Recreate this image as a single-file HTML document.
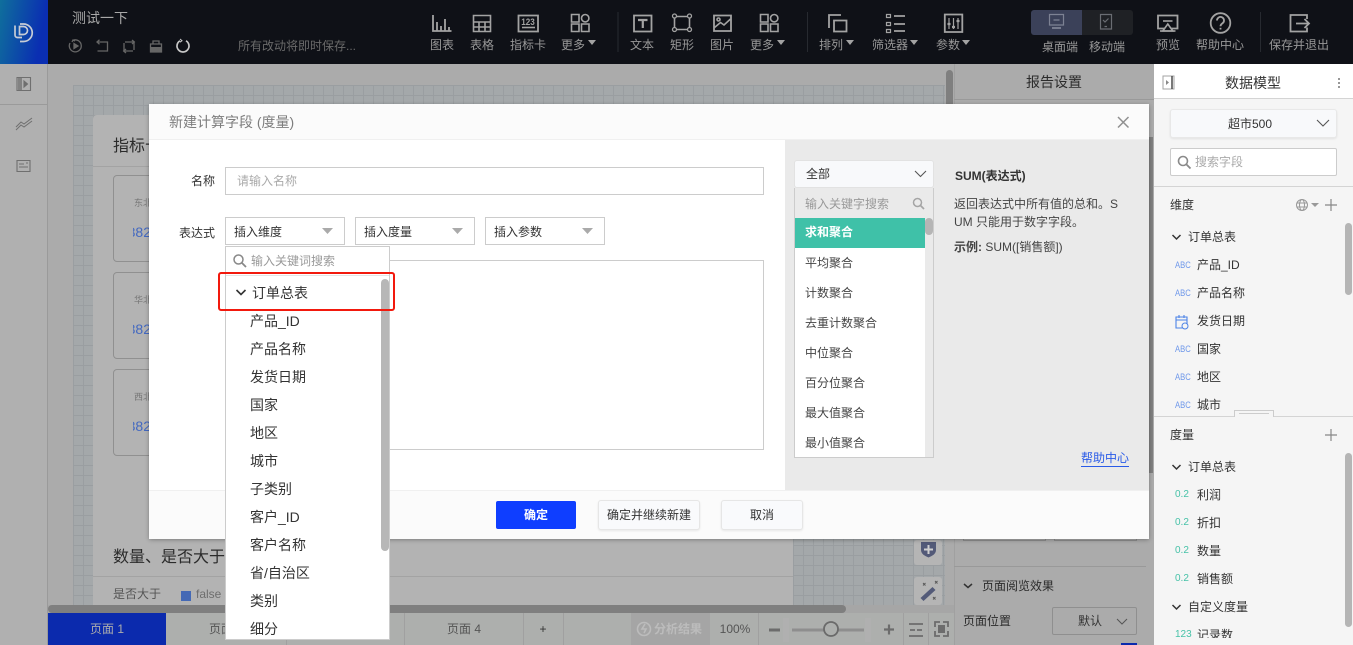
<!DOCTYPE html>
<html lang="zh"><head><meta charset="utf-8"><title>新建计算字段</title>
<style>
html,body{margin:0;padding:0;width:1353px;height:645px;overflow:hidden;background:#ababab}
body{font:12px/16px "Liberation Sans","Noto Sans CJK SC",sans-serif;color:#333;position:relative}
div,span,a{position:absolute;box-sizing:border-box}
.t{white-space:nowrap;line-height:16px}
.c{transform:translateX(-50%)}
.lb{color:#989898;top:37px}
.li{font-size:14px;color:#333;left:250px;line-height:18px}
.fn{left:805px;color:#444}
.abc{left:1175px;font-size:9px;color:#6f98ea;transform:scaleX(.85);transform-origin:left}
.num{left:1175px;font-size:10px;color:#47c2a8}
.f{left:1197px;color:#333}
.sel{background:#fff;border:1px solid #ccc;height:28px;top:217px;width:120px}
.btn{background:#f9fafc;border:1px solid #e6e6e6;border-radius:3px;box-shadow:0 1px 2px rgba(0,0,0,.08);text-align:center;color:#333}
svg{position:absolute;left:0;top:0;overflow:visible}
</style></head><body>

<!-- top bar -->
<div style="left:0;top:0;width:1353px;height:64px;background:#0f1117"></div>
<div style="left:0;top:0;width:48px;height:64px;background:linear-gradient(100deg,#0f6f9c,#0a2eb2 80%)"></div>
<div style="left:1031px;top:10px;width:51px;height:25px;background:#3b4159;border-radius:3px 0 0 3px"></div>
<div style="left:1082px;top:10px;width:51px;height:25px;background:#1f2125;border-radius:0 3px 3px 0"></div>
<div class="t" style="left:72px;top:10px;font-size:14px;color:#a8a8a8">测试一下</div>
<div class="t" style="left:238px;top:38px;color:#6a6a6a">所有改动将即时保存...</div>
<span class="t c lb" style="left:442px">图表</span>
<span class="t c lb" style="left:482px">表格</span>
<span class="t c lb" style="left:528px">指标卡</span>
<span class="t c lb" style="left:573px">更多</span>
<span class="t c lb" style="left:642px">文本</span>
<span class="t c lb" style="left:682px">矩形</span>
<span class="t c lb" style="left:722px">图片</span>
<span class="t c lb" style="left:762px">更多</span>
<span class="t c lb" style="left:831px">排列</span>
<span class="t c lb" style="left:890px">筛选器</span>
<span class="t c lb" style="left:948px">参数</span>
<span class="t c lb" style="left:1060px;top:39px">桌面端</span>
<span class="t c lb" style="left:1107px;top:39px">移动端</span>
<span class="t c lb" style="left:1168px">预览</span>
<span class="t c lb" style="left:1220px">帮助中心</span>
<span class="t c lb" style="left:1299px">保存并退出</span>

<!-- background workspace -->
<div style="left:0;top:64px;width:48px;height:581px;background:#b0b0b0;border-right:1px solid #9a9a9a"></div>
<div style="left:0;top:104px;width:47px;height:1px;background:#9a9a9a"></div>
<div style="left:48px;top:64px;width:906px;height:549px;background:#ababab"></div>
<div style="left:73px;top:85px;width:872px;height:521px;background-color:#a4a8aa;background-image:linear-gradient(#9a9ea1 1px,transparent 1px),linear-gradient(90deg,#9a9ea1 1px,transparent 1px);background-size:10px 10px"></div>
<div style="left:93px;top:115px;width:700px;height:491px;background:#b3b3b3;border-radius:4px 4px 0 0"></div>
<div style="left:93px;top:166px;width:700px;height:1px;background:#a3a3a3"></div>
<div class="t" style="left:113px;top:139px;font-size:16px;color:#2b2b2b">指标卡</div>
<div style="left:113px;top:175px;width:60px;height:87px;border:1px solid #909090;border-radius:4px"></div>
<div style="left:113px;top:272px;width:60px;height:87px;border:1px solid #909090;border-radius:4px"></div>
<div style="left:113px;top:369px;width:60px;height:87px;border:1px solid #909090;border-radius:4px"></div>
<div class="t" style="left:134px;top:195px;font-size:9px;color:#777">东北</div>
<div class="t" style="left:134px;top:292px;font-size:9px;color:#777">华北</div>
<div class="t" style="left:134px;top:389px;font-size:9px;color:#777">西北</div>
<div class="t" style="left:133px;top:224px;width:18px;overflow:hidden;font-size:14px;color:#4469c0;direction:rtl">382</div>
<div class="t" style="left:133px;top:321px;width:18px;overflow:hidden;font-size:14px;color:#4469c0;direction:rtl">382</div>
<div class="t" style="left:133px;top:418px;width:18px;overflow:hidden;font-size:14px;color:#4469c0;direction:rtl">382</div>
<div class="t" style="left:113px;top:549px;font-size:16px;line-height:18px;color:#2b2b2b">数量、是否大于</div>
<div style="left:93px;top:576px;width:700px;height:1px;background:#a3a3a3"></div>
<div class="t" style="left:113px;top:586px;color:#555">是否大于</div>
<div style="left:181px;top:591px;width:10px;height:10px;background:#4469b5"></div>
<div class="t" style="left:196px;top:586px;color:#6e6e6e">false</div>
<div style="left:914px;top:540px;width:28px;height:25px;background:#b5b5b5;border-radius:3px"></div>
<div style="left:914px;top:577px;width:28px;height:28px;background:#b5b5b5;border-radius:3px"></div>
<div style="left:48px;top:605px;width:906px;height:8px;background:#a6a6a6"></div>
<div style="left:48px;top:605px;width:798px;height:8px;background:#7f7f7f;border-radius:4px"></div>
<div style="left:946px;top:70px;width:7px;height:100px;background:#7f7f7f;border-radius:4px"></div>

<!-- bottom bar -->
<div style="left:48px;top:613px;width:906px;height:32px;background:#adafad"></div>
<div style="left:48px;top:613px;width:118px;height:32px;background:#0b2aad"></div>
<div class="t c" style="left:107px;top:621px;color:#adadad">页面 1</div>
<div class="t c" style="left:226px;top:621px;color:#555">页面 2</div>
<div class="t c" style="left:464px;top:621px;color:#555">页面 4</div>
<div class="t c" style="left:543px;top:621px;color:#333">+</div>
<div style="left:286px;top:613px;width:1px;height:32px;background:#a0a0a0"></div>
<div style="left:404px;top:613px;width:1px;height:32px;background:#a0a0a0"></div>
<div style="left:523px;top:613px;width:1px;height:32px;background:#a0a0a0"></div>
<div style="left:563px;top:613px;width:1px;height:32px;background:#a0a0a0"></div>
<div style="left:631px;top:613px;width:79px;height:32px;background:#a5a5a5"></div>
<div class="t" style="left:654px;top:621px;color:#bcbcbc;font-weight:bold">分析结果</div>
<div class="t c" style="left:735px;top:621px;color:#555">100%</div>
<div style="left:758px;top:613px;width:1px;height:32px;background:#a0a0a0"></div>
<div style="left:903px;top:613px;width:1px;height:32px;background:#a0a0a0"></div>
<div style="left:928px;top:613px;width:1px;height:32px;background:#a0a0a0"></div>

<!-- report settings -->
<div style="left:954px;top:64px;width:200px;height:581px;background:#ababab;border-left:1px solid #a0a0a0"></div>
<div style="left:954px;top:99px;width:200px;height:1px;background:#999"></div>
<div class="t c" style="left:1054px;top:74px;font-size:14px;color:#2b2b2b">报告设置</div>
<div style="left:1149px;top:100px;width:4px;height:37px;background:#ababab"></div>
<div style="left:1149px;top:137px;width:4px;height:336px;background:#808080"></div>
<div style="left:954px;top:566px;width:192px;height:1px;background:#999"></div>
<div style="left:963px;top:530px;width:83px;height:11px;border:1px solid #8f8f8f;border-top:0"></div>
<div style="left:1054px;top:530px;width:83px;height:11px;border:1px solid #8f8f8f;border-top:0"></div>
<div class="t" style="left:982px;top:578px;color:#2b2b2b">页面阅览效果</div>
<div class="t" style="left:963px;top:613px;color:#2b2b2b">页面位置</div>
<div style="left:1052px;top:607px;width:85px;height:28px;border:1px solid #8f8f8f;border-radius:2px"></div>
<div class="t" style="left:1078px;top:613px;color:#333">默认</div>
<div style="left:1121px;top:643px;width:16px;height:2px;background:#0b2aad"></div>

<!-- data model panel -->
<div style="left:1154px;top:64px;width:199px;height:581px;background:#f5f5f5"></div>
<div style="left:1154px;top:64px;width:199px;height:35px;background:#fff;border-bottom:1px solid #d4d4d4"></div>
<div class="t c" style="left:1253px;top:75px;font-size:14px;color:#333">数据模型</div>
<div style="left:1170px;top:109px;width:167px;height:29px;background:#f8f9fb;border:1px solid #e8e8e8;border-radius:3px;box-shadow:0 1px 2px rgba(0,0,0,.08)"></div>
<div class="t c" style="left:1250px;top:116px;color:#333">超市500</div>
<div style="left:1170px;top:148px;width:167px;height:28px;background:#fff;border:1px solid #ccc;border-radius:2px"></div>
<div class="t" style="left:1195px;top:154px;color:#aaa">搜索字段</div>
<div style="left:1154px;top:186px;width:199px;height:1px;background:#d4d4d4"></div>
<div class="t" style="left:1170px;top:197px;color:#333">维度</div>
<div class="t" style="left:1188px;top:229px;color:#333">订单总表</div>
<span class="t abc" style="top:257px">ABC</span><span class="t f" style="top:257px">产品_ID</span>
<span class="t abc" style="top:285px">ABC</span><span class="t f" style="top:285px">产品名称</span>
<span class="t f" style="top:313px">发货日期</span>
<span class="t abc" style="top:341px">ABC</span><span class="t f" style="top:341px">国家</span>
<span class="t abc" style="top:369px">ABC</span><span class="t f" style="top:369px">地区</span>
<div style="left:1154px;top:396px;width:190px;height:14px;overflow:hidden">
<span class="t abc" style="left:21px;top:1px">ABC</span><span class="t" style="left:43px;top:1px;color:#333">城市</span></div>
<div style="left:1345px;top:223px;width:7px;height:72px;background:#b5b5b5;border-radius:4px"></div>
<div style="left:1154px;top:416px;width:199px;height:1px;background:#d4d4d4"></div>
<div style="left:1234px;top:410px;width:40px;height:7px;background:#f5f5f5;border:1px solid #ccc;border-bottom:0"></div>
<div style="left:1239px;top:413px;width:30px;height:1px;background:#ccc"></div>
<div class="t" style="left:1170px;top:427px;color:#333">度量</div>
<div class="t" style="left:1188px;top:459px;color:#333">订单总表</div>
<span class="t num" style="top:487px">0.2</span><span class="t f" style="top:487px">利润</span>
<span class="t num" style="top:515px">0.2</span><span class="t f" style="top:515px">折扣</span>
<span class="t num" style="top:543px">0.2</span><span class="t f" style="top:543px">数量</span>
<span class="t num" style="top:571px">0.2</span><span class="t f" style="top:571px">销售额</span>
<div class="t" style="left:1188px;top:599px;color:#333">自定义度量</div>
<div style="left:1154px;top:625px;width:190px;height:13px;overflow:hidden">
<span class="t num" style="left:21px;top:2px">123</span><span class="t" style="left:43px;top:2px;color:#333">记录数</span></div>
<div style="left:1345px;top:453px;width:7px;height:174px;background:#b5b5b5;border-radius:4px"></div>

<!-- icons layer -->
<svg width="1353" height="645" viewBox="0 0 1353 645" fill="none" stroke="#a3a3a3" stroke-width="1.6">
 <!-- logo -->
 <g stroke="#c6ccd6" stroke-width="1.700"><path d="M15 25.500v9.500a2.500 2.500 0 0 0 2.500 2.500h4.500"/><path d="M20 24h3.500a8.700 8.700 0 0 1 0 17.500H20"/><path d="M19.500 26.500v8h4a4 4 0 0 0 0-8z"/></g>
 <!-- history -->
 <g stroke="#666" stroke-width="1.300"><path d="M73 40.300a6 6 0 1 1-3 2.700"/><path d="M72 42l1-2 2 1"/><path d="M74 43.500l4 2.500-4 2.500z" fill="#666"/>
 <path d="M98 42h9.500v9h-10"/><path d="M99.500 39.800l-2.500 2.200 2.500 2.200"/>
 <path d="M125 42h9v8M133 51h-9v-8"/><path d="M132 40l2.300 2-2.300 2M126 49l-2.300 2 2.300 2"/></g>
 <path d="M153 44v-3h6v3M150.500 44h11v8h-11z" stroke="#666" stroke-width="1.300"/><path d="M150.500 47h11v5h-11z" fill="#666" stroke="none"/>
 <path d="M180 40.800a6 6 0 1 0 6 0" stroke="#c8c8c8" stroke-width="1.700"/><path d="M180 39l2 1.700-2 1.500" stroke="#c8c8c8" stroke-width="1"/>
 <!-- chart -->
 <path d="M433 15v16h18.500M437 22v9M441 26v5M445 19v12M449 27v4" stroke-width="1.800"/>
 <path d="M473.500 15.500h17v16h-17zM473.500 22h17M473.500 27h17M479 22v9.500M485 22v9.500"/>
 <path d="M518.500 15.500h19.500v16h-19.500z" stroke-width="1.800"/><path d="M522 27.500h13"/>
 <path d="M571.500 14.500h7.500v7.500h-7.500zM571.500 24h7.500v7.500h-7.500zM581.500 24h7.500v7.500h-7.500z"/><circle cx="585.200" cy="18.200" r="3.700"/>
 <!-- sep -->
 <path d="M618 12v40M807.500 12v40M1260.500 12v40" stroke="#272a30" stroke-width="1"/>
 <path d="M634 15.500h17.500v16h-17.500z" stroke-width="1.800"/><path d="M638 20h9.500M642.800 20v8" stroke-width="2.200"/>
 <path d="M674.500 16.500h15v13h-15z"/><g fill="#0f1117" stroke-width="1.300"><circle cx="674.500" cy="16" r="2"/><circle cx="689.500" cy="16" r="2"/><circle cx="674.500" cy="29.500" r="2"/><circle cx="689.500" cy="29.500" r="2"/></g>
 <path d="M714 15.500h17v15.500h-17z" stroke-width="1.800"/><path d="M714.500 27.500l6-5 3.500 2.500 6.500-6"/><circle cx="718.500" cy="19.500" r="1.500"/>
 <path d="M760.500 14.500h7.500v7.500h-7.500zM760.500 24h7.500v7.500h-7.500zM770.500 24h7.500v7.500h-7.500z"/><circle cx="774.200" cy="18.200" r="3.700"/>
 <path d="M829 28V15h12" stroke-width="1.800"/><path d="M834 20.500h12.500v11H834z" stroke-width="1.800"/>
 <path d="M886.500 14.500h4v3h-4zM886.500 22.500h4v3h-4zM886.500 29.500h4v3h-4z" stroke-width="1.200"/><path d="M894 16h11M894 24h11M894 31h11" stroke-width="1.800"/>
 <path d="M944.800 14.500h17.500v17.500h-17.500z" stroke-width="1.800"/><path d="M949 18v11M953.500 18v11M958 18v11" stroke-width="1.200"/><path d="M947.500 24h3M952 27h3M956.500 21h3" stroke-width="2.200"/>
 <g fill="#a3a3a3" stroke="none"><path d="M588 40h8l-4 5zM777 40h8l-4 5zM846 40h8l-4 5zM910 40h8l-4 5zM962 40h8l-4 5z"/></g>
 <!-- desktop mobile -->
 <g stroke="#7d8294" stroke-width="1.200"><path d="M1049.500 14.500h14v10.500h-14zM1053.500 20h6"/><path d="M1052 28h9" stroke-width="1.800"/></g>
 <g stroke="#6a6d73" stroke-width="1.200"><path d="M1100.500 14.500h11v14.500h-11zM1103 20l2 2 3.500-3.500M1104.500 26.500h2.500"/></g>
 <!-- preview help exit -->
 <path d="M1158 15.500h19.500v13h-19.500z" stroke-width="1.800"/><path d="M1163 21h9.500" /><path d="M1167.800 24l5 7h-10z" fill="#0f1117" stroke-width="1.600"/><path d="M1160 31h15.500" />
 <circle cx="1220.500" cy="23" r="9.800" stroke-width="1.800"/><path d="M1217 20.500a3.500 3.500 0 1 1 5.500 2.800c-1.500 1-2 1.500-2 3" stroke-width="1.800"/><path d="M1220.500 27.800v1.700" stroke-width="1.800"/>
 <path d="M1307 19v-4h-16.500v16.500h16.500v-4" stroke-width="1.800"/><path d="M1296 23.500h12.500M1304.500 19l4.500 4.500-4.500 4.500" stroke-width="1.800"/>
 <!-- left rail -->
 <g stroke="#6f6f6f" stroke-width="1.100"><path d="M17 77.500h13.500v13H17z"/><path d="M19 78v12M21 78v12" stroke-width="1.400"/><path d="M24 81l3.500 3-3.500 3z" fill="#6f6f6f"/>
 <path d="M16 130l5-5 3 2 8-6M16 127l5-5 3 2 8-6" stroke-width="1"/>
 <path d="M17 160.500h13v11H17zM19 164h5M19 167h9M26 163h2"/></g>
 <!-- zoom controls -->
 <path d="M769 630h11" stroke="#6c6c6c" stroke-width="3"/>
 <path d="M792 630h72" stroke="#8e8e8e" stroke-width="3"/>
 <path d="M783 618h6v24h-6zM865 618h6v24h-6z" fill="#b0b0b0" stroke="none"/>
 <circle cx="831" cy="629" r="7" fill="#adafad" stroke="#6a6a6a" stroke-width="1.800"/>
 <path d="M884 629.500h10M889 624.500v10" stroke="#6c6c6c" stroke-width="2.200"/>
 <path d="M909 624h14M909 636h14M910 630h5M917 630h5" stroke="#6c6c6c" stroke-width="1.800"/>
 <path d="M935 627v-5h5M943 622h5v5M948 631v5h-5M940 636h-5v-5" stroke="#6c6c6c" stroke-width="1.800"/><path d="M938 625h7v8h-7z" fill="#6c6c6c" stroke="none"/>
 <circle cx="644" cy="629" r="6.500" stroke="#bcbcbc" stroke-width="1.600"/><path d="M645 624l-3 5h4l-2 4" stroke="#bcbcbc"/>
 <!-- side tools -->
 <path d="M921 542h15v8c0 4-4 6-7.500 7.500-3.500-1.500-7.500-3.500-7.500-7.500z" fill="#535a78" stroke="none"/><path d="M928.500 545v9M924 549.500h9" stroke="#cfcfcf" stroke-width="2"/>
 <path d="M920.500 598l12-11 3 3-12 11z" fill="#535a78" stroke="none"/><path d="M923 583l2.500 2.500M925.500 583l-2.500 2.500M933 597l2.500 2.500M935.500 597l-2.500 2.500M935 581l2.500 2.500M937.500 581l-2.500 2.500" stroke="#5a5a5a" stroke-width="1"/>
 <!-- settings arrows -->
 <path d="M964 584l4 3.500 4-3.500" stroke="#333" stroke-width="1.500"/>
 <path d="M1117 619l5 5 5-5" stroke="#555" stroke-width="1"/>
 <!-- data panel icons -->
 <path d="M1163 76h11v13h-11z" stroke="#a3a3a3" stroke-width="1"/><path d="M1172 76v13" stroke="#4a4a4a" stroke-width="1.500"/><path d="M1166 80l3 2.500-3 2.500z" fill="#888" stroke="none"/>
 <path d="M1339 78v2M1339 82v2M1339 86v2" stroke="#777" stroke-width="1.500"/>
 <path d="M1317 120l6 6 6-6" stroke="#555" stroke-width="1.100"/>
 <circle cx="1183" cy="161" r="4.500" stroke="#8a8a8a" stroke-width="1.600"/><path d="M1186.500 164.500l4 4" stroke="#8a8a8a" stroke-width="1.800"/>
 <circle cx="1302" cy="205" r="5.500" stroke="#999" stroke-width="1"/><ellipse cx="1302" cy="205" rx="2.500" ry="5.500" stroke="#999" stroke-width="1"/><path d="M1297 203h10M1297 207h10" stroke="#999" stroke-width="1"/>
 <path d="M1311 203h8l-4 4z" fill="#999" stroke="none"/>
 <path d="M1325 205h12M1331 199v12M1325 435h12M1331 429v12" stroke="#888" stroke-width="1.200"/>
 <path d="M1172.500 235l4 4 4-4M1172.500 465l4 4 4-4M1172.500 605l4 4 4-4" stroke="#333" stroke-width="1.500"/>
 <path d="M1176 317h11v11h-11zM1176 320h11M1179 315v3M1184 315v3" stroke="#4c83e6" stroke-width="1.100"/><circle cx="1185" cy="326" r="3" fill="#f5f5f5" stroke="#4c83e6" stroke-width="1"/>
</svg>
<div class="t c" style="left:528px;top:17px;font-size:9px;line-height:10px;color:#a3a3a3;font-weight:bold;transform:translateX(-50%) scaleX(.9)">123</div>

<!-- modal -->
<div style="left:149px;top:104px;width:1000px;height:435px;background:#fff;border-radius:2px;box-shadow:0 1px 4px rgba(0,0,0,.3)"></div>
<div style="left:149px;top:104px;width:1000px;height:36px;background:#fbfbfb;border-bottom:1px solid #f0f0f0"></div>
<div class="t" style="left:169px;top:114px;font-size:14px;color:#7d7d7d">新建计算字段 (度量)</div>
<svg width="1353" height="645" fill="none"><path d="M1118 117l10.500 10.500M1128.500 117L1118 127.500" stroke="#909090" stroke-width="1.500"/></svg>
<div style="left:785px;top:140px;width:364px;height:350px;background:#eaeaea"></div>
<div style="left:149px;top:490px;width:1000px;height:49px;background:#fbfbfb;border-top:1px solid #f0f0f0"></div>

<div class="t" style="left:191px;top:173px;color:#333">名称</div>
<div style="left:225px;top:167px;width:539px;height:28px;border:1px solid #ccc"></div>
<div class="t" style="left:237px;top:173px;color:#aaa">请输入名称</div>
<div class="t" style="left:179px;top:225px;color:#333">表达式</div>
<div class="sel" style="left:225px"></div><div class="t" style="left:234px;top:224px">插入维度</div>
<div class="sel" style="left:355px"></div><div class="t" style="left:364px;top:224px">插入度量</div>
<div class="sel" style="left:485px"></div><div class="t" style="left:494px;top:224px">插入参数</div>
<div style="left:225px;top:260px;width:539px;height:190px;border:1px solid #ccc"></div>

<!-- field dropdown -->
<div style="left:225px;top:246px;width:165px;height:394px;background:#fff;border:1px solid #ccc"></div>
<div style="left:226px;top:275px;width:163px;height:1px;background:#e4e4e4"></div>
<div class="t" style="left:251px;top:253px;color:#999">输入关键词搜索</div>
<div class="t" style="left:252px;top:284px;font-size:14px;line-height:18px;color:#333">订单总表</div>
<span class="t li" style="top:312px">产品_ID</span>
<span class="t li" style="top:340px">产品名称</span>
<span class="t li" style="top:368px">发货日期</span>
<span class="t li" style="top:396px">国家</span>
<span class="t li" style="top:424px">地区</span>
<span class="t li" style="top:452px">城市</span>
<span class="t li" style="top:480px">子类别</span>
<span class="t li" style="top:508px">客户_ID</span>
<span class="t li" style="top:536px">客户名称</span>
<span class="t li" style="top:564px">省/自治区</span>
<span class="t li" style="top:592px">类别</span>
<span class="t li" style="top:620px">细分</span>
<div style="left:381px;top:279px;width:8px;height:272px;background:#b7b7b7;border-radius:4px"></div>
<div style="left:218px;top:272px;width:177px;height:39px;border:2px solid #f2190d;border-radius:3px"></div>

<!-- function panel -->
<div style="left:794px;top:160px;width:140px;height:28px;background:#f8f9fb;border:1px solid #e2e2e2;border-radius:3px"></div>
<div class="t" style="left:806px;top:166px;color:#333">全部</div>
<div style="left:794px;top:188px;width:140px;height:270px;border:1px solid #ccc;border-top:0;background:#eaeaea"></div>
<div style="left:795px;top:218px;width:130px;height:239px;background:#fff"></div>
<div style="left:795px;top:218px;width:130px;height:30px;background:#3fc1a8"></div>
<div style="left:925px;top:218px;width:8px;height:17px;background:#b5b5b5;border-radius:4px"></div>
<div class="t" style="left:805px;top:196px;color:#999">输入关键字搜索</div>
<span class="t fn" style="top:224px;color:#fff;font-weight:bold">求和聚合</span>
<span class="t fn" style="top:255px">平均聚合</span>
<span class="t fn" style="top:285px">计数聚合</span>
<span class="t fn" style="top:315px">去重计数聚合</span>
<span class="t fn" style="top:345px">中位聚合</span>
<span class="t fn" style="top:375px">百分位聚合</span>
<span class="t fn" style="top:405px">最大值聚合</span>
<span class="t fn" style="top:435px">最小值聚合</span>
<div class="t" style="left:955px;top:168px;font-weight:bold;color:#333">SUM(表达式)</div>
<div class="t" style="left:954px;top:196px;color:#444">返回表达式中所有值的总和。S</div>
<div class="t" style="left:954px;top:214px;color:#444">UM 只能用于数字字段。</div>
<div class="t" style="left:954px;top:239px;color:#444"><b>示例:</b> SUM([销售额])</div>
<div class="t" style="left:1081px;top:450px;color:#2a5be8;border-bottom:1px solid #2a5be8">帮助中心</div>

<!-- footer buttons -->
<div class="t" style="left:496px;top:501px;width:80px;height:28px;line-height:28px;background:#0f3eff;color:#fff;text-align:center;border-radius:2px;font-weight:bold">确定</div>
<div class="t btn" style="left:598px;top:500px;width:102px;height:30px;line-height:28px">确定并继续新建</div>
<div class="t btn" style="left:721px;top:500px;width:82px;height:30px;line-height:28px">取消</div>

<svg width="1353" height="645" fill="none">
 <path d="M322 228h11l-5.500 6z" fill="#aaa"/><path d="M452 228h11l-5.500 6z" fill="#aaa"/><path d="M582 228h11l-5.500 6z" fill="#aaa"/>
 <circle cx="238.500" cy="259.500" r="4.500" stroke="#888" stroke-width="1.500"/><path d="M242 263l4 4" stroke="#888" stroke-width="1.800"/>
 <path d="M236.500 290l4.500 4.500 4.500-4.500" stroke="#333" stroke-width="1.600"/>
 <path d="M915 171l5.500 5.500 5.500-5.500" stroke="#555" stroke-width="1.100"/>
 <circle cx="917.500" cy="202.500" r="4" stroke="#a5a5a5" stroke-width="1.500"/><path d="M920.500 205.500l3.500 3.500" stroke="#a5a5a5" stroke-width="1.700"/>
</svg>
</body></html>
